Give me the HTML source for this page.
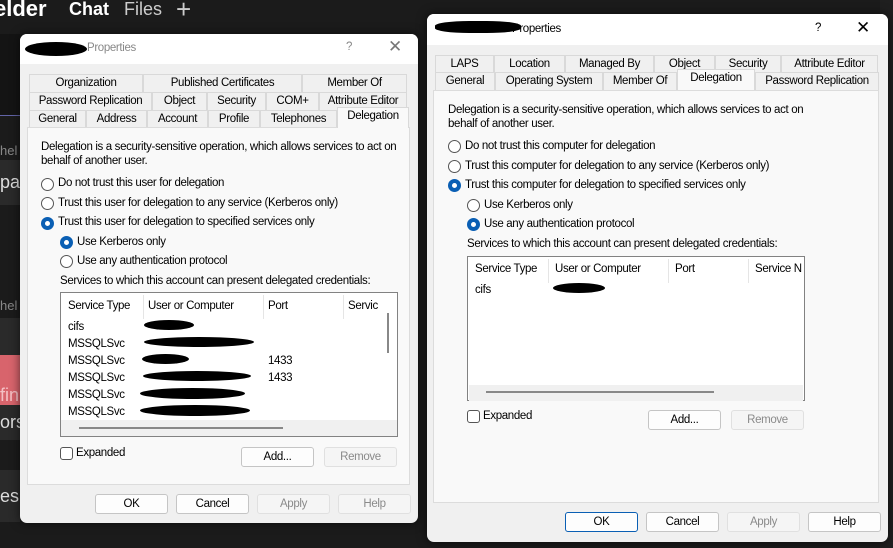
<!DOCTYPE html>
<html><head><meta charset="utf-8"><style>
*{box-sizing:border-box;margin:0;padding:0}
body{width:893px;height:548px;overflow:hidden;background:#1b1b1b;font-family:"Liberation Sans",sans-serif;font-size:11.5px;letter-spacing:-0.35px;color:#000;position:relative}
.a{position:absolute;white-space:nowrap}
.dlg{position:absolute;background:#f0f0f0;border-radius:7px;overflow:hidden;box-shadow:0 0 10px rgba(0,0,0,.6)}
.tb{position:absolute;left:0;top:0;right:0;background:#fff}
.tab{position:absolute;height:18px;border:1px solid #d9d9d9;border-bottom:none;background:#f0f0f0;text-align:center;line-height:17px}
.tab.sel{background:#f9f9f9;height:21px;z-index:2}
.panel{position:absolute;background:#f9f9f9;border:1px solid #dcdcdc}
.r{position:absolute;width:13px;height:13px;border:1px solid #555;border-radius:50%;background:#fff}
.r.on{border:4px solid #0a5fb4}
.btn{position:absolute;height:20px;border:1px solid #c5c5c5;border-radius:3px;background:#fdfdfd;text-align:center;line-height:18px}
.btn.dis{color:#8a8a8a;background:#f5f5f5;border-color:#e0e0e0}
.list{position:absolute;background:#fff;border:1px solid #828282}
.blob{position:absolute;background:#000;border-radius:50%}
.cb{position:absolute;width:13px;height:13px;border:1px solid #555;border-radius:3px;background:#fff}
.dk{position:absolute;background:#2a2a2a;color:#ddd;font-size:18px;overflow:hidden;letter-spacing:0}
</style></head><body>
<div class="a" style="left:-6px;top:-4px;color:#fff;font-size:22px;font-weight:bold;letter-spacing:0">elder</div>
<div class="a" style="left:69px;top:-1px;color:#fff;font-size:18px;font-weight:bold;letter-spacing:0">Chat</div>
<div class="a" style="left:124px;top:-1px;color:#ccc;font-size:18px;letter-spacing:0">Files</div>
<div class="a" style="left:176px;top:-6px;color:#ccc;font-size:26px">+</div>
<div class="a" style="left:0;top:34px;width:20px;height:81px;background:#141414"></div>
<div class="a" style="left:0;top:115px;width:20px;height:1px;background:#6264a7"></div>
<div class="a" style="left:0;top:143px;color:#888;font-size:13px;letter-spacing:0">hel</div>
<div class="dk" style="left:0;top:160px;width:20px;height:45px;line-height:45px">pat</div>
<div class="a" style="left:0;top:298px;color:#888;font-size:13px;letter-spacing:0">hel</div>
<div class="dk" style="left:0;top:318px;width:20px;height:47px"></div>
<div class="dk" style="left:0;top:355px;width:20px;height:50px;background:#d8646c;color:#f4c0c4;line-height:80px">fin</div>
<div class="dk" style="left:0;top:405px;width:20px;height:35px;line-height:35px">ors</div>
<div class="dk" style="left:0;top:470px;width:20px;height:52px;line-height:52px">es b</div>
<div class="a" style="left:880px;top:0;width:13px;height:548px;background:#1f1f1f"></div>

<!-- LEFT DIALOG -->
<div class="dlg" style="left:20px;top:34px;width:398px;height:489px">
 <div class="tb" style="height:30px"></div>
 <div class="blob" style="left:5px;top:8px;width:62px;height:14px"></div>
 <div class="a" style="left:67px;top:8px;color:#888">Properties</div>
 <div class="a" style="left:326px;top:7px;color:#888">?</div>
 <div class="a" style="left:368px;top:3px;color:#777;font-size:17px">✕</div>
 <div class="tab" style="left:9px;top:40px;width:114px">Organization</div>
 <div class="tab" style="left:123px;top:40px;width:159px">Published Certificates</div>
 <div class="tab" style="left:282px;top:40px;width:105px">Member Of</div>
 <div class="tab" style="left:9px;top:58px;width:123px">Password Replication</div>
 <div class="tab" style="left:132px;top:58px;width:55px">Object</div>
 <div class="tab" style="left:187px;top:58px;width:59px">Security</div>
 <div class="tab" style="left:246px;top:58px;width:53px">COM+</div>
 <div class="tab" style="left:299px;top:58px;width:88px">Attribute Editor</div>
 <div class="tab" style="left:9px;top:76px;width:57px">General</div>
 <div class="tab" style="left:66px;top:76px;width:61px">Address</div>
 <div class="tab" style="left:127px;top:76px;width:61px">Account</div>
 <div class="tab" style="left:188px;top:76px;width:52px">Profile</div>
 <div class="tab" style="left:240px;top:76px;width:77px">Telephones</div>
 <div class="tab sel" style="left:317px;top:73px;width:72px">Delegation</div>
 <div class="panel" style="left:7px;top:93px;width:383px;height:358px"></div>
 <div class="a" style="left:21px;top:106px;line-height:14px">Delegation is a security-sensitive operation, which allows services to act on<br>behalf of another user.</div>
 <div class="r" style="left:21px;top:144px"></div><div class="a" style="left:38px;top:143px">Do not trust this user for delegation</div>
 <div class="r" style="left:21px;top:163px"></div><div class="a" style="left:38px;top:163px">Trust this user for delegation to any service (Kerberos only)</div>
 <div class="r on" style="left:21px;top:183px"></div><div class="a" style="left:38px;top:182px">Trust this user for delegation to specified services only</div>
 <div class="r on" style="left:40px;top:202px"></div><div class="a" style="left:57px;top:202px">Use Kerberos only</div>
 <div class="r" style="left:40px;top:221px"></div><div class="a" style="left:57px;top:221px">Use any authentication protocol</div>
 <div class="a" style="left:40px;top:241px">Services to which this account can present delegated credentials:</div>
 <div class="list" style="left:40px;top:258px;width:338px;height:145px">
  <div class="a" style="left:82px;top:2px;width:1px;height:24px;background:#e5e5e5"></div>
  <div class="a" style="left:202px;top:2px;width:1px;height:24px;background:#e5e5e5"></div>
  <div class="a" style="left:282px;top:2px;width:1px;height:24px;background:#e5e5e5"></div>
  <div class="a" style="left:7px;top:7px">Service Type</div><div class="a" style="left:87px;top:7px">User or Computer</div><div class="a" style="left:207px;top:7px">Port</div><div class="a" style="left:287px;top:7px">Servic</div>
  <div class="a" style="left:7px;top:28px">cifs</div>
  <div class="a" style="left:7px;top:45px">MSSQLSvc</div>
  <div class="a" style="left:7px;top:62px">MSSQLSvc</div><div class="a" style="left:207px;top:62px">1433</div>
  <div class="a" style="left:7px;top:79px">MSSQLSvc</div><div class="a" style="left:207px;top:79px">1433</div>
  <div class="a" style="left:7px;top:96px">MSSQLSvc</div>
  <div class="a" style="left:7px;top:113px">MSSQLSvc</div>
  <div class="blob" style="left:83px;top:27px;width:50px;height:10px"></div>
  <div class="blob" style="left:83px;top:44px;width:110px;height:10px"></div>
  <div class="blob" style="left:81px;top:61px;width:47px;height:10px"></div>
  <div class="blob" style="left:82px;top:78px;width:108px;height:10px"></div>
  <div class="blob" style="left:79px;top:95px;width:105px;height:11px"></div>
  <div class="blob" style="left:79px;top:112px;width:110px;height:11px"></div>
  <div class="a" style="left:0;top:127px;width:336px;height:16px;background:#f0f0f0"></div>
  <div class="a" style="left:18px;top:134px;width:204px;height:2px;background:#888"></div>
  <div class="a" style="left:326px;top:20px;width:2px;height:40px;background:#888"></div>
 </div>
 <div class="cb" style="left:40px;top:413px"></div><div class="a" style="left:56px;top:413px">Expanded</div>
 <div class="btn" style="left:221px;top:413px;width:73px">Add...</div>
 <div class="btn dis" style="left:304px;top:413px;width:73px">Remove</div>
 <div class="btn" style="left:75px;top:460px;width:73px">OK</div>
 <div class="btn" style="left:156px;top:460px;width:73px">Cancel</div>
 <div class="btn dis" style="left:237px;top:460px;width:73px">Apply</div>
 <div class="btn dis" style="left:318px;top:460px;width:73px">Help</div>
</div>

<!-- RIGHT DIALOG -->
<div class="dlg" style="left:427px;top:14px;width:461px;height:528px">
 <div class="tb" style="height:31px"></div>
 <div class="blob" style="left:8px;top:7px;width:86px;height:12px;border-radius:40%"></div>
 <div class="a" style="left:85px;top:9px">Properties</div>
 <div class="a" style="left:388px;top:8px">?</div>
 <div class="a" style="left:429px;top:4px;font-size:17px">✕</div>
 <div class="tab" style="left:8px;top:41px;width:59px">LAPS</div>
 <div class="tab" style="left:67px;top:41px;width:71px">Location</div>
 <div class="tab" style="left:138px;top:41px;width:89px">Managed By</div>
 <div class="tab" style="left:227px;top:41px;width:61px">Object</div>
 <div class="tab" style="left:288px;top:41px;width:66px">Security</div>
 <div class="tab" style="left:354px;top:41px;width:97px">Attribute Editor</div>
 <div class="tab" style="left:8px;top:58px;width:60px">General</div>
 <div class="tab" style="left:68px;top:58px;width:108px">Operating System</div>
 <div class="tab" style="left:176px;top:58px;width:74px">Member Of</div>
 <div class="tab sel" style="left:250px;top:55px;width:78px">Delegation</div>
 <div class="tab" style="left:328px;top:58px;width:124px">Password Replication</div>
 <div class="panel" style="left:6px;top:76px;width:446px;height:413px"></div>
 <div class="a" style="left:21px;top:89px;line-height:14px">Delegation is a security-sensitive operation, which allows services to act on<br>behalf of another user.</div>
 <div class="r" style="left:21px;top:126px"></div><div class="a" style="left:38px;top:126px">Do not trust this computer for delegation</div>
 <div class="r" style="left:21px;top:146px"></div><div class="a" style="left:38px;top:146px">Trust this computer for delegation to any service (Kerberos only)</div>
 <div class="r on" style="left:21px;top:165px"></div><div class="a" style="left:38px;top:165px">Trust this computer for delegation to specified services only</div>
 <div class="r" style="left:40px;top:185px"></div><div class="a" style="left:57px;top:185px">Use Kerberos only</div>
 <div class="r on" style="left:40px;top:204px"></div><div class="a" style="left:57px;top:204px">Use any authentication protocol</div>
 <div class="a" style="left:40px;top:224px">Services to which this account can present delegated credentials:</div>
 <div class="list" style="left:40px;top:242px;width:338px;height:145px">
  <div class="a" style="left:80px;top:2px;width:1px;height:24px;background:#e5e5e5"></div>
  <div class="a" style="left:200px;top:2px;width:1px;height:24px;background:#e5e5e5"></div>
  <div class="a" style="left:280px;top:2px;width:1px;height:24px;background:#e5e5e5"></div>
  <div class="a" style="left:7px;top:6px">Service Type</div><div class="a" style="left:87px;top:6px">User or Computer</div><div class="a" style="left:207px;top:6px">Port</div><div class="a" style="left:287px;top:6px">Service N</div>
  <div class="a" style="left:7px;top:27px">cifs</div>
  <div class="blob" style="left:85px;top:26px;width:52px;height:10px"></div>
  <div class="a" style="left:1px;top:128px;width:334px;height:16px;background:#f0f0f0"></div>
  <div class="a" style="left:18px;top:134px;width:228px;height:2px;background:#888"></div>
 </div>
 <div class="cb" style="left:40px;top:396px"></div><div class="a" style="left:56px;top:396px">Expanded</div>
 <div class="btn" style="left:221px;top:396px;width:73px">Add...</div>
 <div class="btn dis" style="left:304px;top:396px;width:73px">Remove</div>
 <div class="btn" style="left:138px;top:498px;width:73px;border-color:#0a5fb4">OK</div>
 <div class="btn" style="left:219px;top:498px;width:73px">Cancel</div>
 <div class="btn dis" style="left:300px;top:498px;width:73px">Apply</div>
 <div class="btn" style="left:381px;top:498px;width:73px">Help</div>
</div>
</body></html>
